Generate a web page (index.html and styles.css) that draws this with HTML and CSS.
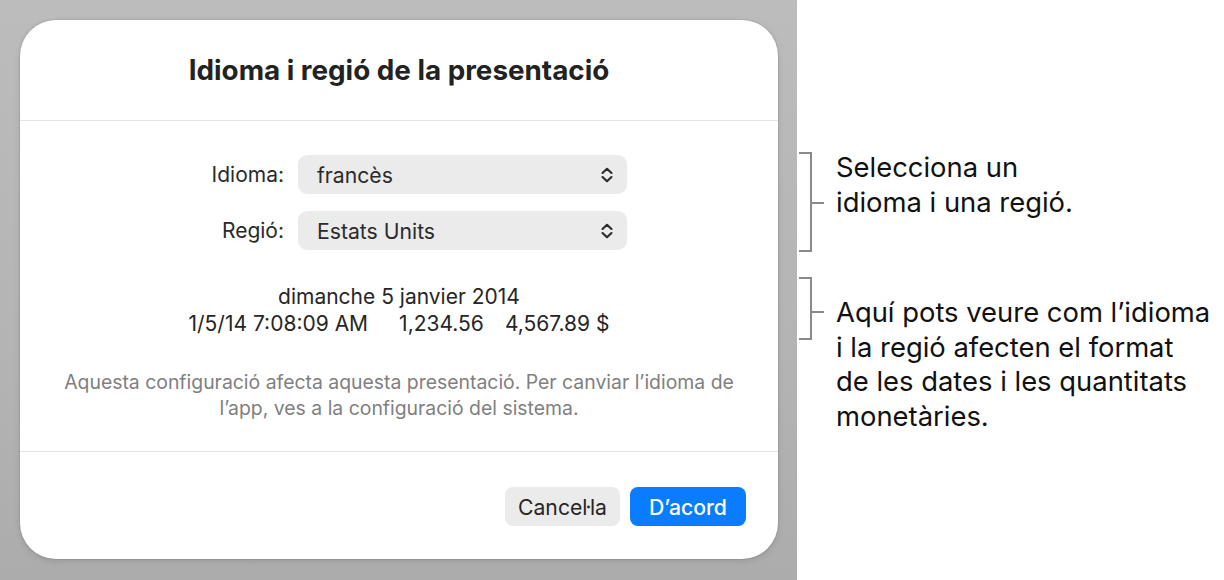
FILE: index.html
```html
<!DOCTYPE html>
<html lang="ca">
<head>
    <meta charset="UTF-8">
    <meta name="viewport" content="width=device-width, initial-scale=1.0">
    <title>Idioma i regió de la presentació</title>
    <link rel="stylesheet" href="styles.css">
</head>
<body>
    <div class="page">
        <div class="stage">
            <div class="dialog">
                <div class="dialog-header">
                    <h1 class="dialog-title">Idioma i regió de la presentació</h1>
                </div>

                <div class="dialog-body">
                    <div class="form">
                        <label class="form-label">Idioma:</label>
                        <div class="popup">
                            <span>francès</span>
                            <svg class="chevrons" width="12" height="16" viewBox="0 0 12 16">
                                <path d="M1.5 6 L6 1.8 L10.5 6" />
                                <path d="M1.5 10 L6 14.2 L10.5 10" />
                            </svg>
                        </div>

                        <label class="form-label">Regió:</label>
                        <div class="popup">
                            <span>Estats Units</span>
                            <svg class="chevrons" width="12" height="16" viewBox="0 0 12 16">
                                <path d="M1.5 6 L6 1.8 L10.5 6" />
                                <path d="M1.5 10 L6 14.2 L10.5 10" />
                            </svg>
                        </div>
                    </div>

                    <div class="preview">
                        <div>dimanche 5 janvier 2014</div>
                        <div class="preview-row">
                            <span>1/5/14 7:08:09 AM</span>
                            <span class="amount">1,234.56</span>
                            <span class="currency">4,567.89 $</span>
                        </div>
                    </div>

                    <p class="note-text">Aquesta configuració afecta aquesta presentació. Per canviar l’idioma de<br>l’app, ves a la configuració del sistema.</p>
                </div>

                <div class="dialog-footer">
                    <button class="btn">Cancel·la</button>
                    <button class="btn btn-primary">D’acord</button>
                </div>
            </div>
        </div>

        <div class="callouts">
            <div class="callout callout-select">
                <div class="bracket"></div>
                <div class="callout-text">Selecciona un<br>idioma i una regió.</div>
            </div>
            <div class="callout callout-preview">
                <div class="bracket"></div>
                <div class="callout-text">Aquí pots veure com l’idioma<br>i la regió afecten el format<br>de les dates i les quantitats<br>monetàries.</div>
            </div>
        </div>
    </div>
</body>
</html>
```

FILE: styles.css
```css
* {
    margin: 0;
    padding: 0;
    box-sizing: border-box;
}

body {
    background: #fff;
    font-family: Inter, "Noto Sans", sans-serif;
    color: #222;
    overflow: hidden;
}

.page {
    display: flex;
    width: 1224px;
    height: 580px;
}

/* grey backdrop behind the sheet */
.stage {
    width: 797px;
    height: 580px;
    padding: 20px 0 0 20px;
    background: linear-gradient(180deg, #bcbcbc 0%, #b4b4b4 60%, #acacac 100%);
}

.dialog {
    width: 758px;
    height: 539px;
    background: #fff;
    border-radius: 36px;
    box-shadow: 0 0 0 1px rgba(0,0,0,0.06), 0 2px 6px rgba(0,0,0,0.12);
    display: flex;
    flex-direction: column;
}

.dialog-header {
    height: 101px;
    padding-top: 33px;
    border-bottom: 1px solid #e4e4e4;
    text-align: center;
}

.dialog-title {
    font-size: 27.8px;
    line-height: 34px;
    font-weight: 700;
    color: #222;
}

.dialog-body {
    height: 331px;
    padding-top: 34px;
    border-bottom: 1px solid #e4e4e4;
}

.form {
    display: grid;
    grid-template-columns: 264px 329px;
    column-gap: 14px;
    row-gap: 17px;
    align-items: center;
}

.form-label {
    text-align: right;
    font-size: 21px;
    color: #2a2a2a;
}

.popup {
    height: 39px;
    background: #ebebeb;
    border-radius: 9px;
    display: flex;
    align-items: center;
    justify-content: space-between;
    padding: 0 14px 0 19px;
    font-size: 21.2px;
    color: #2a2a2a;
}

.chevrons path {
    fill: none;
    stroke: #2a2a2a;
    stroke-width: 2.1;
    stroke-linecap: round;
    stroke-linejoin: round;
}

.preview {
    margin-top: 33px;
    text-align: center;
    font-size: 21px;
    line-height: 27px;
    color: #262626;
}

.preview-row {
    display: flex;
    justify-content: center;
}

.amount {
    margin-left: 31px;
}

.currency {
    margin-left: 21px;
}

.note-text {
    margin-top: 32px;
    text-align: center;
    font-size: 19.4px;
    line-height: 26px;
    color: #808080;
}

.dialog-footer {
    flex: 1;
    display: flex;
    justify-content: flex-end;
    align-items: flex-start;
    gap: 10px;
    padding: 35px 32px 0 0;
}

.btn {
    height: 39px;
    border: none;
    border-radius: 8px;
    background: #ebebeb;
    color: #262626;
    font-family: inherit;
    font-size: 21.2px;
    padding: 0 12px;
    min-width: 115px;
}

.btn-primary {
    background: #0a7cff;
    color: #fff;
    font-weight: 500;
    min-width: 116px;
}

/* annotation column */
.callouts {
    flex: 1;
    padding: 150px 0 0 2px;
}

.callout {
    display: flex;
    align-items: flex-start;
}

.bracket {
    position: relative;
    width: 13px;
    border: 2px solid #8a8a8a;
    border-left: none;
    flex-shrink: 0;
}

.bracket::after {
    content: "";
    position: absolute;
    left: 11px;
    width: 14px;
    height: 2px;
    background: #8a8a8a;
}

.callout-select .bracket {
    height: 100px;
    margin-top: 2px;
}

.callout-select .bracket::after {
    top: 48px;
}

.callout-preview {
    margin-top: 25px;
}

.callout-preview .bracket {
    height: 63px;
}

.callout-preview .bracket::after {
    top: 32px;
}

.callout-text {
    margin-left: 24px;
    font-size: 27.4px;
    line-height: 34.5px;
    color: #111;
}

.callout-preview .callout-text {
    margin-top: 18px;
}
```
